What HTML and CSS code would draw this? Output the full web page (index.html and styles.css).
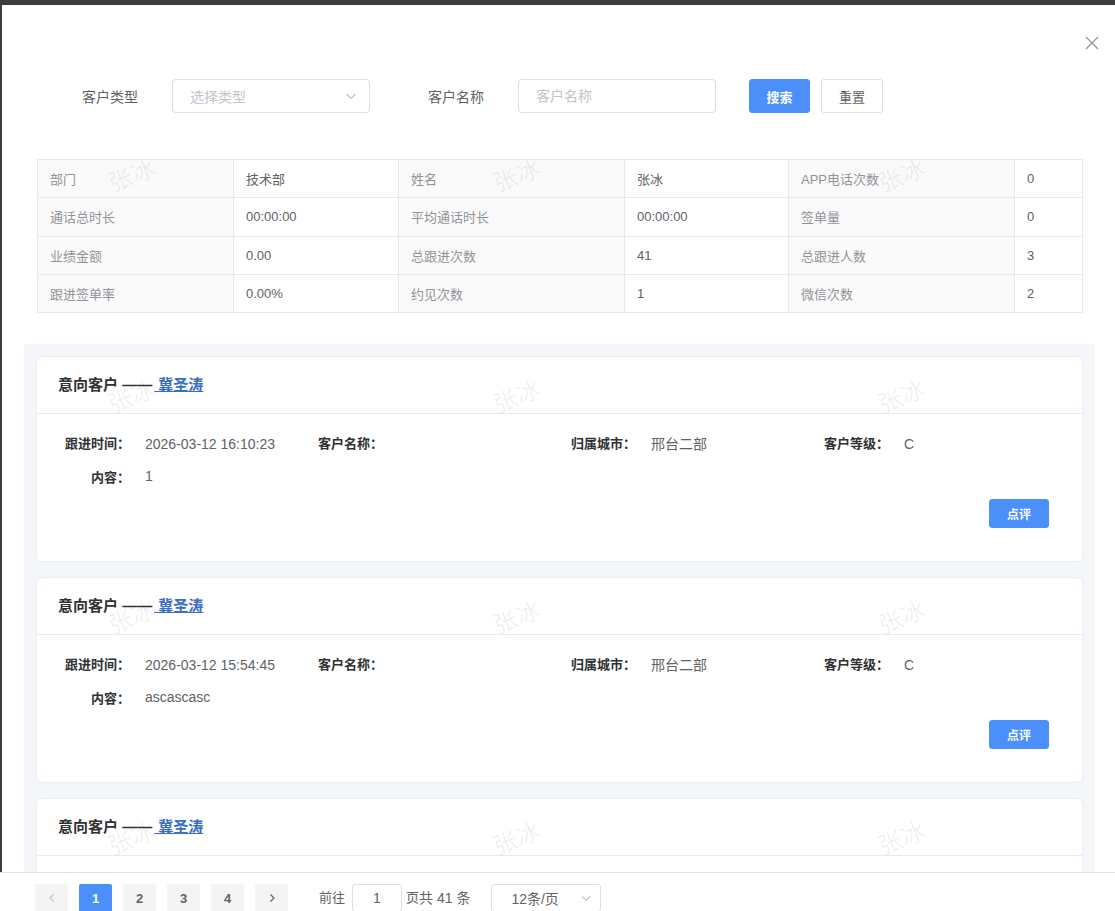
FILE: index.html
```html
<!DOCTYPE html>
<html lang="zh-CN">
<head>
    <meta charset="UTF-8">
    <meta name="viewport" content="width=device-width, initial-scale=1.0">
    <title>跟进记录</title>
    <link rel="stylesheet" href="styles.css">
</head>
<body>
    <div class="dialog">
        <div class="dialog-head">
            <button class="close-btn" aria-label="关闭">
                <svg width="14" height="14" viewBox="0 0 14 14"><path d="M1 1L13 13M13 1L1 13" stroke="#909399" stroke-width="1.2" fill="none"/></svg>
            </button>
        </div>

        <div class="filter">
            <span class="filter-label">客户类型</span>
            <div class="select">
                <span class="placeholder">选择类型</span>
                <svg class="select-arrow" width="12" height="12" viewBox="0 0 12 12"><path d="M1.5 4L6 8.5L10.5 4" stroke="#c0c4cc" stroke-width="1.1" fill="none"/></svg>
            </div>
            <span class="filter-label second">客户名称</span>
            <input class="text-input" type="text" placeholder="客户名称">
            <button class="btn primary search">搜索</button>
            <button class="btn reset">重置</button>
        </div>

        <table class="stats">
            <colgroup>
                <col style="width:196px"><col style="width:165px"><col style="width:226px">
                <col style="width:164px"><col style="width:226px"><col style="width:68px">
            </colgroup>
            <tr>
                <td class="key">部门</td><td>技术部</td>
                <td class="key">姓名</td><td>张冰</td>
                <td class="key">APP电话次数</td><td>0</td>
            </tr>
            <tr>
                <td class="key">通话总时长</td><td>00:00:00</td>
                <td class="key">平均通话时长</td><td>00:00:00</td>
                <td class="key">签单量</td><td>0</td>
            </tr>
            <tr>
                <td class="key">业绩金额</td><td>0.00</td>
                <td class="key">总跟进次数</td><td>41</td>
                <td class="key">总跟进人数</td><td>3</td>
            </tr>
            <tr>
                <td class="key">跟进签单率</td><td>0.00%</td>
                <td class="key">约见次数</td><td>1</td>
                <td class="key">微信次数</td><td>2</td>
            </tr>
        </table>

        <div class="records">
            <div class="card">
                <div class="card-head">意向客户 ——<a href="#"> 冀圣涛</a></div>
                <div class="card-body">
                    <div class="fields">
                        <div class="field"><span class="f-label">跟进时间：</span><span class="f-value">2026-03-12 16:10:23</span></div>
                        <div class="field"><span class="f-label">客户名称：</span><span class="f-value"></span></div>
                        <div class="field"><span class="f-label">归属城市：</span><span class="f-value">邢台二部</span></div>
                        <div class="field"><span class="f-label">客户等级：</span><span class="f-value">C</span></div>
                        <div class="field wide"><span class="f-label">内容：</span><span class="f-value">1</span></div>
                    </div>
                    <div class="card-actions"><button class="btn primary small">点评</button></div>
                </div>
            </div>

            <div class="card">
                <div class="card-head">意向客户 ——<a href="#"> 冀圣涛</a></div>
                <div class="card-body">
                    <div class="fields">
                        <div class="field"><span class="f-label">跟进时间：</span><span class="f-value">2026-03-12 15:54:45</span></div>
                        <div class="field"><span class="f-label">客户名称：</span><span class="f-value"></span></div>
                        <div class="field"><span class="f-label">归属城市：</span><span class="f-value">邢台二部</span></div>
                        <div class="field"><span class="f-label">客户等级：</span><span class="f-value">C</span></div>
                        <div class="field wide"><span class="f-label">内容：</span><span class="f-value">ascascasc</span></div>
                    </div>
                    <div class="card-actions"><button class="btn primary small">点评</button></div>
                </div>
            </div>

            <div class="card">
                <div class="card-head">意向客户 ——<a href="#"> 冀圣涛</a></div>
                <div class="card-body">
                    <div class="fields">
                        <div class="field"><span class="f-label">跟进时间：</span><span class="f-value">2026-03-12 15:41:02</span></div>
                        <div class="field"><span class="f-label">客户名称：</span><span class="f-value"></span></div>
                        <div class="field"><span class="f-label">归属城市：</span><span class="f-value">邢台二部</span></div>
                        <div class="field"><span class="f-label">客户等级：</span><span class="f-value">C</span></div>
                        <div class="field wide"><span class="f-label">内容：</span><span class="f-value">1</span></div>
                    </div>
                    <div class="card-actions"><button class="btn primary small">点评</button></div>
                </div>
            </div>
        </div>
    </div>

    <div class="pager-bar">
        <button class="pager-btn disabled" aria-label="上一页">
            <svg width="10" height="10" viewBox="0 0 10 10"><path d="M6.5 1.5L3 5L6.5 8.5" stroke="#c0c4cc" stroke-width="1.2" fill="none"/></svg>
        </button>
        <button class="pager-btn active">1</button>
        <button class="pager-btn">2</button>
        <button class="pager-btn">3</button>
        <button class="pager-btn">4</button>
        <button class="pager-btn" aria-label="下一页">
            <svg width="10" height="10" viewBox="0 0 10 10"><path d="M3.5 1.5L7 5L3.5 8.5" stroke="#606266" stroke-width="1.2" fill="none"/></svg>
        </button>
        <span class="jump">前往</span>
        <input class="jump-input" type="text" value="1">
        <span class="jump-suffix">页</span><span class="total">共 41 条</span>
        <div class="size-select">
            <span>12条/页</span>
            <svg width="12" height="12" viewBox="0 0 12 12"><path d="M2 4.5L6 8.5L10 4.5" stroke="#c0c4cc" stroke-width="1.1" fill="none"/></svg>
        </div>
    </div>

    <div class="watermark">
        <span>张冰</span><span>张冰</span><span>张冰</span>
        <span>张冰</span><span>张冰</span><span>张冰</span>
        <span>张冰</span><span>张冰</span><span>张冰</span>
        <span>张冰</span><span>张冰</span><span>张冰</span>
    </div>
</body>
</html>
```

FILE: styles.css
```css
html, body {
    height: 100%;
}
body {
    margin: 0;
    display: flex;
    flex-direction: column;
    background: #3d3d3d;
    font-family: "Liberation Sans", Arial, "Noto Sans CJK SC", sans-serif;
    color: #606266;
    overflow: hidden;
}
button, input {
    font-family: inherit;
}

/* dialog */
.dialog {
    flex: 1;
    min-height: 0;
    margin: 5px 0 0 2px;
    background: #fff;
    overflow: hidden;
}
.dialog-head {
    height: 74px;
    box-sizing: border-box;
    padding: 31px 16px 0 0;
    display: flex;
    justify-content: flex-end;
    align-items: flex-start;
}
.close-btn {
    border: none;
    background: none;
    padding: 0;
    width: 14px;
    height: 14px;
    cursor: pointer;
    display: block;
}
.close-btn svg {
    display: block;
}

/* filter row */
.filter {
    display: flex;
    align-items: center;
    height: 34px;
    padding-left: 80px;
    font-size: 14px;
}
.filter-label {
    width: 56px;
    margin-right: 34px;
    color: #606266;
    white-space: nowrap;
}
.filter-label.second {
    margin-left: 58px;
}
.select,
.text-input {
    width: 198px;
    height: 34px;
    box-sizing: border-box;
    border: 1px solid #dcdfe6;
    border-radius: 4px;
    background: #fff;
}
.select {
    display: flex;
    align-items: center;
    justify-content: space-between;
    padding: 0 12px 0 17px;
}
.placeholder {
    color: #c0c4cc;
}
.select-arrow {
    display: block;
}
.text-input {
    padding: 0 0 0 17px;
    font-size: 14px;
    color: #606266;
    outline: none;
}
.text-input::placeholder {
    color: #c0c4cc;
}
.btn {
    height: 34px;
    border: 1px solid #dcdfe6;
    border-radius: 3px;
    background: #fff;
    color: #606266;
    font-size: 13px;
    cursor: pointer;
    padding: 0;
}
.btn.primary {
    background: #4b8ffb;
    border-color: #4b8ffb;
    color: #fff;
    font-weight: bold;
}
.btn.search {
    width: 61px;
    margin-left: 33px;
}
.btn.reset {
    width: 62px;
    margin-left: 11px;
}
.btn.small {
    width: 60px;
    height: 29px;
    font-size: 12px;
}

/* stats table */
.stats {
    margin: 46px 0 0 35px;
    width: 1045px;
    table-layout: fixed;
    border-collapse: collapse;
    font-size: 13px;
}
.stats td {
    height: 37.3px;
    padding: 0 12px;
    border: 1px solid #e6e9f1;
    color: #606266;
    white-space: nowrap;
}
.stats td.key {
    background: #fafafa;
    color: #909399;
}

/* follow-up records */
.records {
    margin: 31px 20px 0 22px;
    padding: 12px;
    background: #f5f6fa;
}
.card {
    background: #fff;
    border: 1px solid #ebeef5;
    border-radius: 6px;
    margin-bottom: 15px;
}
.card-head {
    height: 56px;
    line-height: 56px;
    padding: 0 21px;
    border-bottom: 1px solid #e8eaf1;
    font-size: 15px;
    font-weight: bold;
    color: #303133;
}
.card-head a {
    color: #3a6ebf;
    text-decoration: underline;
    margin-left: 2px;
}
.card-body {
    padding: 20px 33px 33px 13px;
}
.fields {
    display: grid;
    grid-template-columns: repeat(4, 253px);
    row-gap: 14px;
    font-size: 13px;
    line-height: 20px;
}
.field {
    display: flex;
}
.field.wide {
    grid-column: 1 / -1;
}
.f-label {
    width: 80px;
    flex: none;
    text-align: right;
    font-weight: bold;
    color: #303133;
}
.f-value {
    margin-left: 15px;
    font-size: 14px;
    color: #606266;
}
.field.wide .f-value {
    margin-top: -2px;
}
.card-actions {
    display: flex;
    justify-content: flex-end;
    margin-top: 11px;
}

/* pagination */
.pager-bar {
    flex: none;
    height: 39px;
    box-sizing: border-box;
    border-top: 1px solid #dcdfe6;
    background: #fff;
    padding: 11px 0 0 35px;
    display: flex;
    align-items: flex-start;
    overflow: hidden;
    font-size: 13px;
    color: #606266;
}
.pager-btn {
    flex: none;
    width: 33px;
    height: 28px;
    margin-right: 11px;
    border: none;
    border-radius: 2px;
    background: #f4f4f5;
    color: #606266;
    font-size: 13px;
    font-weight: bold;
    padding: 0;
    display: flex;
    align-items: center;
    justify-content: center;
    cursor: pointer;
}
.pager-btn.active {
    background: #4b8ffb;
    color: #fff;
}
.pager-btn.disabled {
    cursor: not-allowed;
}
.jump {
    margin-left: 20px;
    line-height: 28px;
}
.jump-input {
    width: 50px;
    height: 28px;
    box-sizing: border-box;
    margin-left: 7px;
    border: 1px solid #dcdfe6;
    border-radius: 3px;
    text-align: center;
    font-size: 14px;
    color: #606266;
    outline: none;
}
.jump-suffix {
    margin-left: 4px;
    line-height: 28px;
}
.total {
    line-height: 28px;
    font-size: 14px;
}
.size-select {
    margin-left: 21px;
    width: 110px;
    height: 28px;
    box-sizing: border-box;
    border: 1px solid #dcdfe6;
    border-radius: 3px;
    padding: 0 8px 0 19px;
    display: flex;
    align-items: center;
    justify-content: space-between;
    font-size: 14px;
}

/* watermark overlay */
.watermark {
    position: absolute;
    left: -62px;
    top: 63px;
    display: grid;
    grid-template-columns: repeat(3, 385px);
    grid-auto-rows: 221px;
    place-items: center;
    pointer-events: none;
    z-index: 5;
}
.watermark span {
    font-size: 24px;
    color: rgba(0, 0, 0, 0.065);
    transform: rotate(-22deg);
    white-space: nowrap;
}
```
